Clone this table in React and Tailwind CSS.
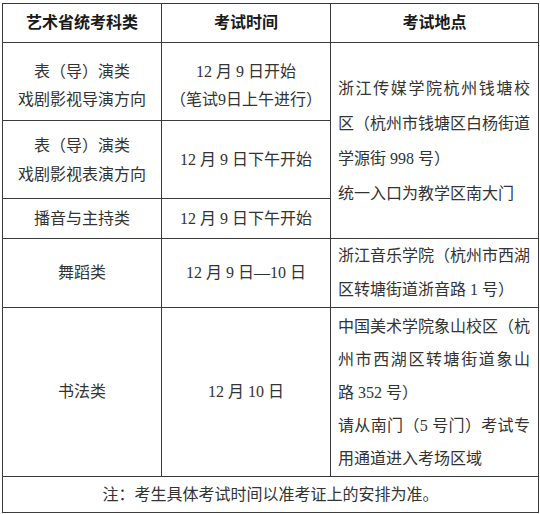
import React from 'react';

const font = { fontFamily: '"Liberation Serif", "Noto Sans CJK SC", serif' };

// lines in the place column; "full" lines are stretched to the cell width
const Lines = ({ lines, leading }) => (
  <div className={`pl-[7px] pr-[8px] ${leading}`}>
    {lines.map(([text, full], i) => (
      <div
        key={i}
        className={`whitespace-nowrap ${full ? 'text-justify [text-align-last:justify]' : 'text-left'}`}
      >
        {text}
      </div>
    ))}
  </div>
);

const cell = 'border border-[#3a3a3a] p-0 align-middle';

const App = () => {
  return (
    <div className="bg-white w-[540px] h-[514px] pt-[3px] pl-[2px] text-[16px] text-[#333333]" style={font}>
      <table className="table-fixed border-collapse w-[536px]">
        <colgroup>
          <col className="w-[159px]" />
          <col className="w-[169px]" />
          <col className="w-[208px]" />
        </colgroup>
        <tbody>
          <tr className="h-[39px] font-bold text-[#1a1a1a]">
            <td className={`${cell} text-center`}>艺术省统考科类</td>
            <td className={`${cell} text-center`}>考试时间</td>
            <td className={`${cell} text-center`}>考试地点</td>
          </tr>
          <tr className="h-[78px]">
            <td className={`${cell} text-center leading-[28px] pt-[8px]`}>
              <div>表（导）演类</div>
              <div>戏剧影视导演方向</div>
            </td>
            <td className={`${cell} text-center leading-[28px] pt-[8px]`}>
              <div>12 月 9 日开始</div>
              <div>（笔试9日上午进行）</div>
            </td>
            <td className={cell} rowSpan={3}>
              <Lines
                leading="leading-[35px]"
                lines={[
                  ['浙江传媒学院杭州钱塘校', true],
                  ['区（杭州市钱塘区白杨街道', true],
                  ['学源街 998 号）', false],
                  ['统一入口为教学区南大门', false],
                ]}
              />
            </td>
          </tr>
          <tr className="h-[78px]">
            <td className={`${cell} text-center leading-[29px]`}>
              <div>表（导）演类</div>
              <div>戏剧影视表演方向</div>
            </td>
            <td className={`${cell} text-center`}>12 月 9 日下午开始</td>
          </tr>
          <tr className="h-[40px]">
            <td className={`${cell} text-center`}>播音与主持类</td>
            <td className={`${cell} text-center`}>12 月 9 日下午开始</td>
          </tr>
          <tr className="h-[68px]">
            <td className={`${cell} text-center`}>舞蹈类</td>
            <td className={`${cell} text-center`}>12 月 9 日—10 日</td>
            <td className={cell}>
              <Lines
                leading="leading-[34px]"
                lines={[
                  ['浙江音乐学院（杭州市西湖', true],
                  ['区转塘街道浙音路 1 号）', false],
                ]}
              />
            </td>
          </tr>
          <tr className="h-[169px]">
            <td className={`${cell} text-center`}>书法类</td>
            <td className={`${cell} text-center`}>12 月 10 日</td>
            <td className={cell}>
              <Lines
                leading="leading-[33px]"
                lines={[
                  ['中国美术学院象山校区（杭', true],
                  ['州市西湖区转塘街道象山', true],
                  ['路 352 号）', false],
                  ['请从南门（5 号门）考试专', true],
                  ['用通道进入考场区域', false],
                ]}
              />
            </td>
          </tr>
          <tr className="h-[36px]">
            <td className={`${cell} text-center`} colSpan={3}>
              注：考生具体考试时间以准考证上的安排为准。
            </td>
          </tr>
        </tbody>
      </table>
    </div>
  );
};

export default App;
